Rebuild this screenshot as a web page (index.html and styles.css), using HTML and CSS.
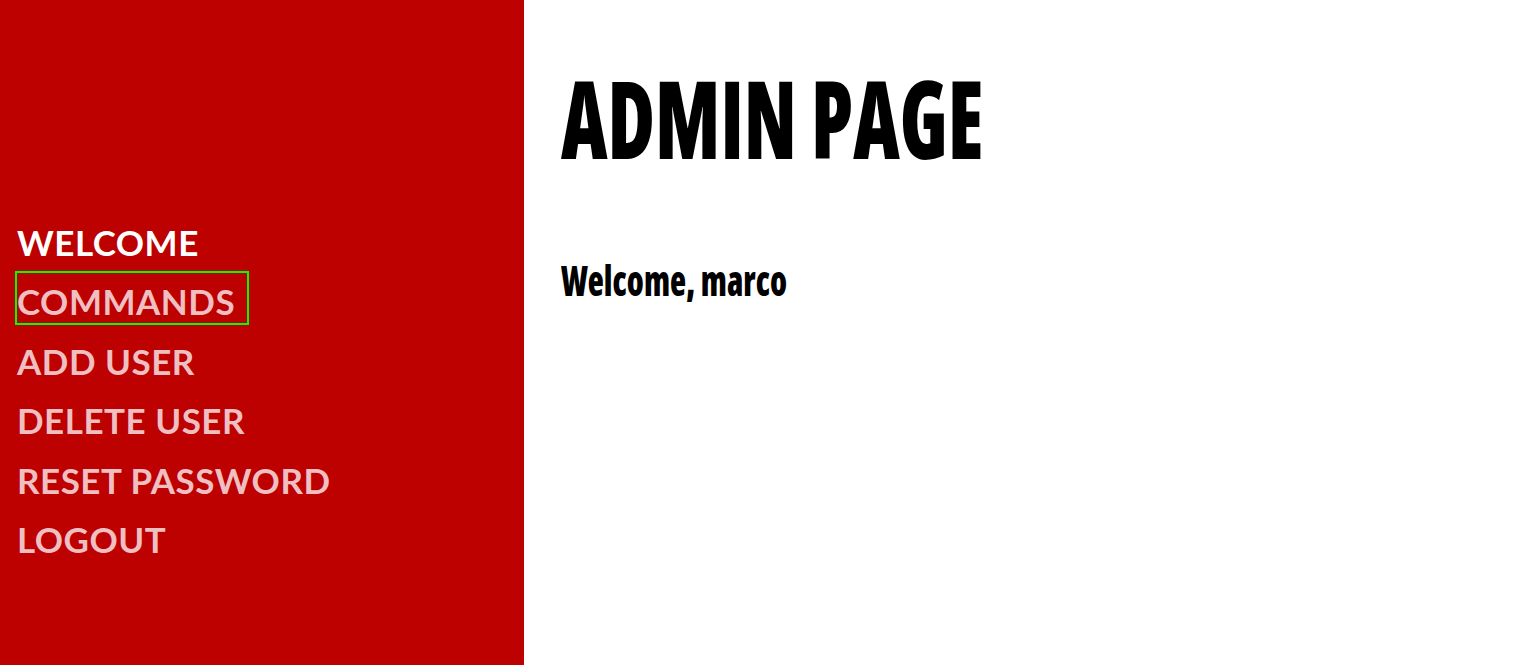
FILE: index.html
```html
<!DOCTYPE html>
<html>
<head>
<meta charset="utf-8">
<link rel="stylesheet" href="styles.css">
</head>
<body>
<div class="layout">
  <nav class="sidebar">
    <ul class="menu">
      <li><a class="link active" href="#">WELCOME</a></li>
      <li><a class="link focused" href="#">COMMANDS</a></li>
      <li><a class="link" href="#">ADD USER</a></li>
      <li><a class="link" href="#">DELETE USER</a></li>
      <li><a class="link" href="#">RESET PASSWORD</a></li>
      <li><a class="link" href="#">LOGOUT</a></li>
    </ul>
  </nav>
  <main class="content">
    <h1 class="title"><span class="squeeze">ADMIN PAGE</span></h1>
    <h2 class="greeting"><span class="squeeze2">Welcome, marco</span></h2>
  </main>
</div>
</body>
</html>
```
FILE: styles.css
```css
html, body {
  margin: 0;
  padding: 0;
  height: 100%;
}
.layout {
  display: flex;
  height: 100vh;
}
.sidebar {
  width: 524px;
  flex: none;
  background: #bd0000;
}
.menu {
  list-style: none;
  margin: 0;
  padding: 213.5px 0 0 17px;
  display: flex;
  flex-direction: column;
  align-items: flex-start;
  gap: 9.6px;
}
.link {
  display: inline-block;
  font-family: "Lato", "Open Sans", sans-serif;
  font-weight: 700;
  font-size: 35px;
  letter-spacing: 0.5px;
  line-height: 44px;
  padding-top: 6px;
  color: #efbfc2;
  text-decoration: none;
}
.link.active {
  color: #ffffff;
}
.link.focused {
  outline: 2px solid #00ff00;
  width: 230px;
}
.content {
  flex: 1;
  padding-left: 37px;
}
.title {
  margin: 64px 0 0;
  font-family: "Open Sans", sans-serif;
  font-stretch: 75%;
  font-weight: 800;
  font-size: 108px;
  line-height: 108px;
  color: #000;
  white-space: nowrap;
}
.squeeze {
  display: inline-block;
  transform: scaleX(0.75);
  transform-origin: left center;
}
.greeting {
  margin: 85.5px 0 0;
  font-family: "Open Sans", sans-serif;
  font-stretch: 75%;
  font-weight: 800;
  font-size: 43px;
  line-height: 43px;
  color: #000;
  white-space: nowrap;
}
.squeeze2 {
  display: inline-block;
  transform: scaleX(0.77);
  transform-origin: left center;
}
```
